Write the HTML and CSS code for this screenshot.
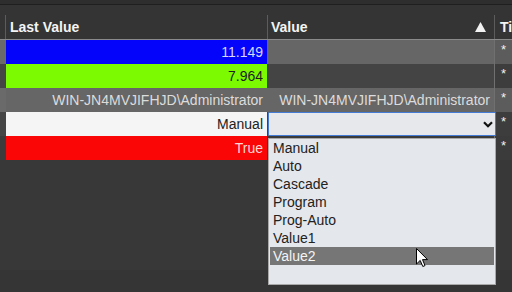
FILE: index.html
```html
<!DOCTYPE html>
<html lang="en">
<head>
  <meta charset="UTF-8" />
  <meta name="viewport" content="width=device-width, initial-scale=1.0" />
  <title>Tag values</title>
  <link rel="stylesheet" href="styles.css">
</head>
<body>
  <div class="page">
    <div class="topbar"></div>

    <div class="grid">
      <div class="row head">
        <div class="gut"></div>
        <div class="hcell">Last Value</div>
        <div class="hcell sep">
          <span>Value</span>
          <svg class="sort" width="11" height="10" viewBox="0 0 11 10"><polygon points="5.5,0 11,10 0,10" fill="#f2f2f2"/></svg>
        </div>
        <div class="hcell sep clip">Timestamp</div>
      </div>

      <div class="row light">
        <div class="gut"></div>
        <div class="cell val blue">11.149</div>
        <div class="cell"></div>
        <div class="cell star">*</div>
      </div>

      <div class="row dark">
        <div class="gut"></div>
        <div class="cell val green">7.964</div>
        <div class="cell"></div>
        <div class="cell star">*</div>
      </div>

      <div class="row light">
        <div class="gut"></div>
        <div class="cell val">WIN-JN4MVJIFHJD\Administrator</div>
        <div class="cell val">WIN-JN4MVJIFHJD\Administrator</div>
        <div class="cell star">*</div>
      </div>

      <div class="row dark">
        <div class="gut"></div>
        <div class="cell val white">Manual</div>
        <div class="cell edit">
          <div class="select">
            <svg class="chevron" width="10" height="7" viewBox="0 0 10 7"><path d="M1 1.2 L5 5.2 L9 1.2" fill="none" stroke="#111" stroke-width="2.2"/></svg>
          </div>
        </div>
        <div class="cell star">*</div>
      </div>

      <div class="row last">
        <div class="gut"></div>
        <div class="cell val red">True</div>
        <div class="cell"></div>
        <div class="cell star">*</div>
      </div>
    </div>

    <div class="fill"></div>
    <div class="footer"></div>
  </div>

  <!-- lista aberta do select -->
  <ul class="dropdown">
    <li>Manual</li>
    <li>Auto</li>
    <li>Cascade</li>
    <li>Program</li>
    <li>Prog-Auto</li>
    <li>Value1</li>
    <li class="hover">Value2</li>
  </ul>

  <svg class="cursor" width="13" height="20" viewBox="0 0 13 20">
    <path d="M0.5 0.5 L0.5 16 L4.2 12.4 L6.8 18.5 L9 17.6 L6.5 11.6 L11.5 11.6 Z" fill="#fff" stroke="#000" stroke-width="1" stroke-linejoin="round"/>
  </svg>
</body>
</html>
```

FILE: styles.css
```css
html, body {
  margin: 0;
  padding: 0;
}

body {
  width: 512px;
  height: 292px;
  overflow: hidden;
  background: #383838;
  font-family: "Liberation Sans", Arial, sans-serif;
  font-size: 14px;
  position: relative;
}

.page {
  display: flex;
  flex-direction: column;
  height: 292px;
}

.topbar {
  height: 4px;
  background: #2e2e2e;
  border-bottom: 1px solid #1f1f1f;
}

.row {
  display: grid;
  grid-template-columns: 6px 261px 227px 1fr;
  height: 24px;
}

/* Cabeçalho */
.row.head {
  height: 24px;
  padding-top: 10px;
  background: #343434;
  border-bottom: 1px solid #8a8a8a;
}

.head .gut {
  border-right: 1px solid #5c5c5c;
  background: #343434;
}

.hcell {
  color: #f4f4f4;
  font-weight: bold;
  line-height: 24px;
  padding-left: 4px;
  white-space: nowrap;
  overflow: hidden;
}

.hcell.sep {
  border-left: 1px solid #5c5c5c;
  padding-left: 3px;
  display: flex;
  align-items: center;
  justify-content: space-between;
  padding-right: 8px;
}

.hcell.clip {
  padding-left: 5px;
  padding-right: 0;
  justify-content: flex-start;
}

.sort {
  display: block;
}

/* Linhas */
.cell {
  line-height: 24px;
  white-space: nowrap;
  overflow: hidden;
}

.cell.val {
  text-align: right;
  padding-right: 4px;
  color: #dcdcdc;
}

.cell.star {
  border-left: 1px solid #707070;
  color: #f0f0f0;
  font-size: 13px;
  padding-left: 6px;
  line-height: 20px;
}

.light .gut { background: #6a6a6a; }
.light .cell { background: #666666; }
.light .star { background: #5c5c5c; }

.dark .gut { background: #454545; }
.dark .cell { background: #444444; }
.dark .star { background: #3d3d3d; }

.last .gut { background: #3b3b3b; }
.last .cell { background: #3b3b3b; }

.row .blue { background: #0404fa; color: #d6d6ff; }
.row .green { background: #7cfa02; color: #1e1e1e; }
.row .white { background: #f5f5f5; color: #222; }
.row .red { background: #fa0606; color: #ffd6d6; }

.cell.edit {
  background: #444444;
  padding-left: 1px;
  overflow: visible;
}

.select {
  box-sizing: border-box;
  height: 24px;
  width: 228px;
  background: #e6e8eb;
  border: 1px solid #447bd4;
  border-radius: 1px;
  display: flex;
  align-items: center;
  justify-content: flex-end;
  padding-right: 2px;
  position: relative;
  z-index: 2;
}

.chevron {
  display: block;
}

.fill {
  flex: 1;
}

.footer {
  height: 22px;
  background: #353535;
}

/* Lista aberta */
.dropdown {
  position: absolute;
  left: 268px;
  top: 138px;
  width: 226px;
  height: 145px;
  margin: 0;
  padding: 0;
  list-style: none;
  background: #e4e7eb;
  border: 1px solid #a9a9a9;
  z-index: 3;
}

.dropdown li {
  height: 18px;
  line-height: 18px;
  padding-left: 3px;
  margin: 0 1px;
  color: #222;
}

.dropdown li.hover {
  background: #767676;
  color: #f4f4f4;
}

.cursor {
  position: absolute;
  left: 416px;
  top: 248px;
  z-index: 5;
}
```
